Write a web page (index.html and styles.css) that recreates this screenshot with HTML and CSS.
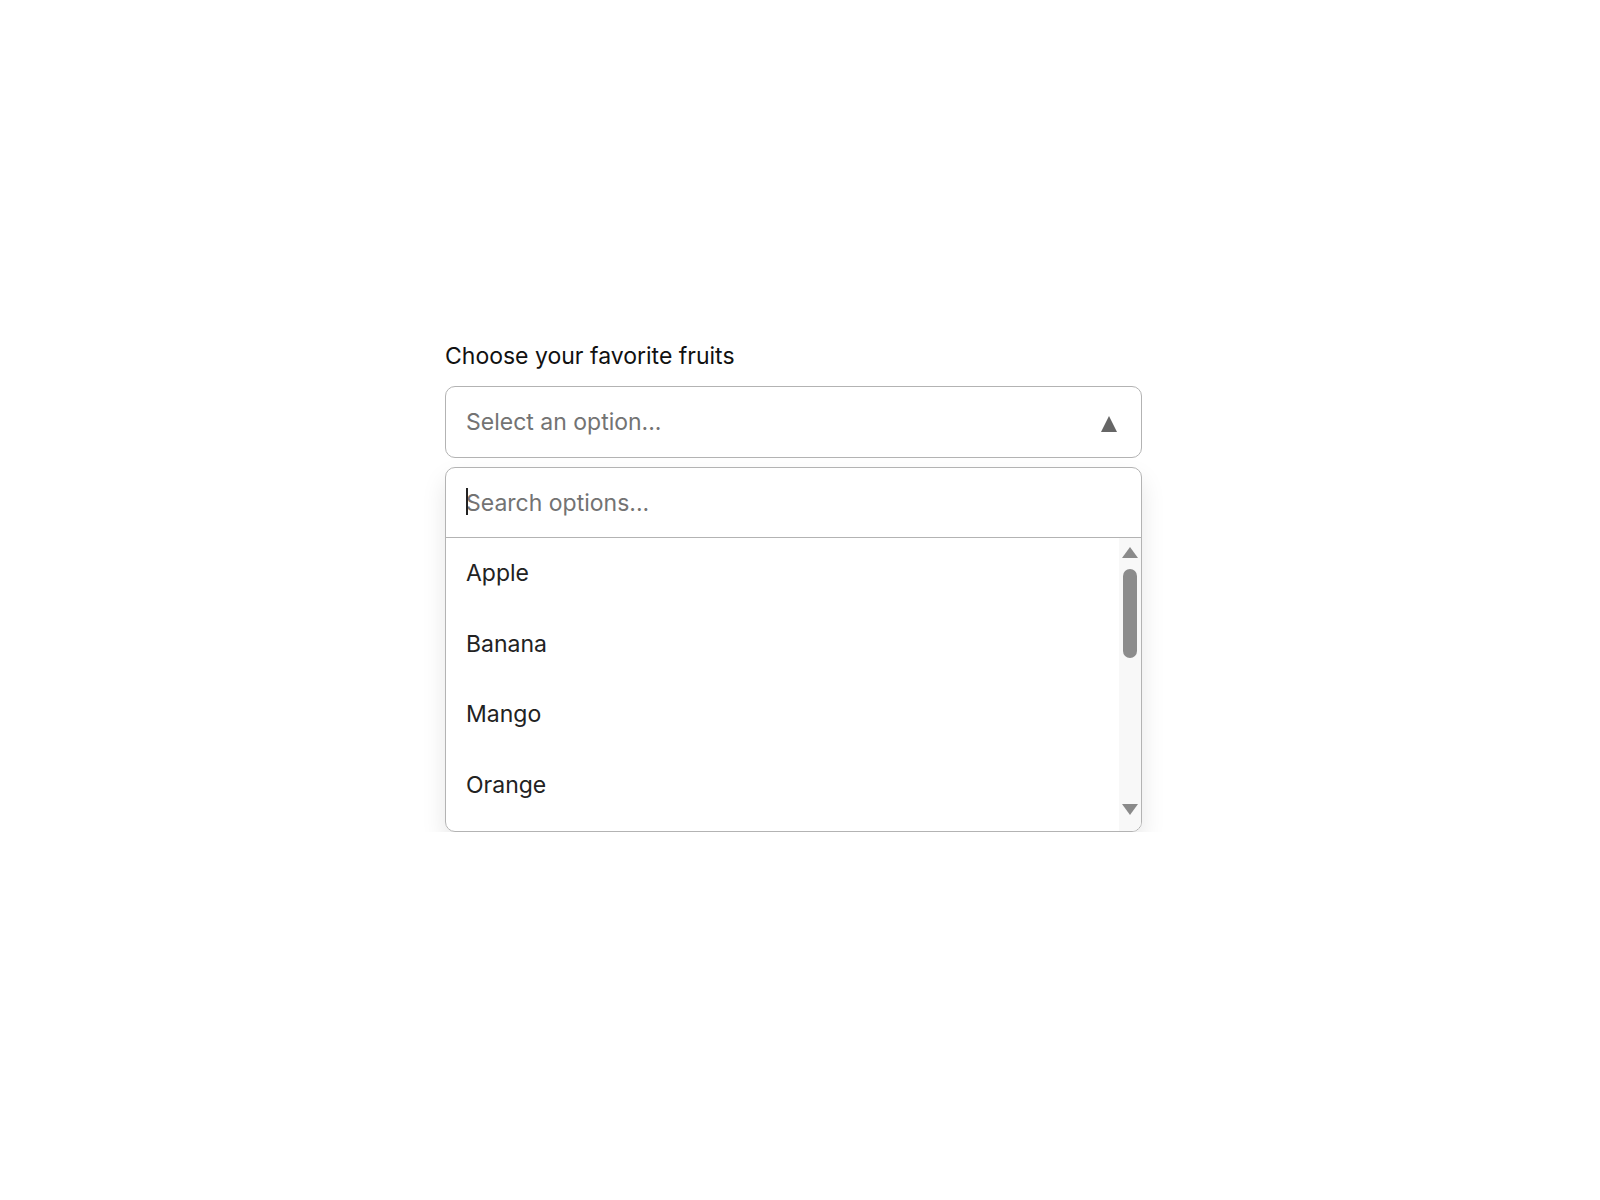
FILE: index.html
```html
<!DOCTYPE html>
<html lang="en">
<head>
    <meta charset="UTF-8">
    <meta name="viewport" content="width=device-width, initial-scale=1.0">
    <title>Fruit picker</title>
<link rel="stylesheet" href="styles.css">
</head>
<body>
    <div class="page">
        <div class="picker">
            <label class="picker__label" for="search">Choose your favorite fruits</label>

            <div class="select">
                <span class="select__value">Select an option...</span>
                <span class="select__arrow"></span>
            </div>

            <div class="dropdown">
                <div class="dropdown__search">
                    <input type="text" id="search" placeholder="Search options...">
                </div>
                <div class="dropdown__body">
                    <ul class="dropdown__list">
                        <li class="dropdown__item">Apple</li>
                        <li class="dropdown__item">Banana</li>
                        <li class="dropdown__item">Mango</li>
                        <li class="dropdown__item">Orange</li>
                        <li class="dropdown__item">Pineapple</li>
                        <li class="dropdown__item">Strawberry</li>
                        <li class="dropdown__item">Grapes</li>
                        <li class="dropdown__item">Watermelon</li>
                        <li class="dropdown__item">Cherry</li>
                        <li class="dropdown__item">Kiwi</li>
                    </ul>
                    <div class="scrollbar">
                        <span class="scrollbar__up"></span>
                        <span class="scrollbar__thumb"></span>
                        <span class="scrollbar__down"></span>
                    </div>
                </div>
            </div>
        </div>
    </div>
</body>
</html>
```

FILE: styles.css
```css
* {
  margin: 0;
  padding: 0;
  box-sizing: border-box;
}
body {
    font-family: Inter, "Noto Sans", sans-serif;
    background: #fff;
    color: #222;
}
.page {
    padding: 342px 0 0 445px;
}
.picker {
    width: 697px;
}
.picker__label {
    display: block;
    font-size: 23px;
    line-height: 28px;
    color: #111;
    margin-bottom: 16px;
}
.select {
    height: 72px;
    border: 1.5px solid #b3b3b3;
    border-radius: 10px;
    padding: 0 24px 0 20px;
    display: flex;
    align-items: center;
    justify-content: space-between;
}
.select__value {
    font-size: 23px;
    color: #737373;
}
.select__arrow {
    width: 0;
    height: 0;
    margin-top: 4px;
    border-left: 8px solid transparent;
    border-right: 8px solid transparent;
    border-bottom: 16px solid #666;
}
.dropdown {
    margin-top: 9px;
    border: 1.5px solid #b3b3b3;
    border-radius: 10px;
    overflow: hidden;
    box-shadow: 0 12px 24px rgba(0, 0, 0, 0.1);
}
.dropdown__search {
    position: relative;
    height: 70px;
    border-bottom: 1.5px solid #b3b3b3;
    display: flex;
    align-items: center;
    padding: 0 20px;
}
/* text cursor of the focused field */
.dropdown__search::before {
    content: "";
    position: absolute;
    left: 20px;
    top: 20px;
    width: 2px;
    height: 27px;
    background: #222;
}
.dropdown__search input {
    width: 100%;
    border: none;
    outline: none;
    font-family: inherit;
    font-size: 23px;
    color: #222;
}
.dropdown__search input::placeholder {
    color: #737373;
}
.dropdown__body {
    display: flex;
    height: 293px;
}
.dropdown__list {
    flex: 1;
    list-style: none;
    overflow: hidden;
}
.dropdown__item {
    height: 70.5px;
    padding: 0 20px;
    display: flex;
    align-items: center;
    font-size: 23px;
    color: #222;
}
.scrollbar {
    width: 22px;
    background: #f8f8f8;
    display: flex;
    flex-direction: column;
    align-items: center;
    padding: 9px 0 16px;
}
.scrollbar__up {
    border-left: 8px solid transparent;
    border-right: 8px solid transparent;
    border-bottom: 11px solid #8a8a8a;
}
.scrollbar__thumb {
    width: 14px;
    height: 89px;
    margin-top: 11px;
    border-radius: 7px;
    background: #8c8c8c;
}
.scrollbar__down {
    margin-top: auto;
    border-left: 8px solid transparent;
    border-right: 8px solid transparent;
    border-top: 11px solid #8a8a8a;
}
```
